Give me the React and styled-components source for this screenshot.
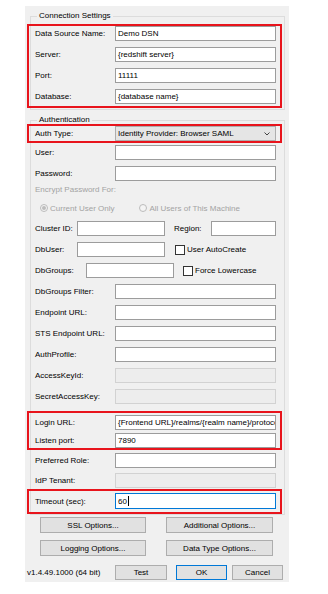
import React from "react";
import styled, { createGlobalStyle } from "styled-components";

const GlobalStyle = createGlobalStyle`
  body {
    margin: 0;
    background: #ffffff;
    font-family: "Liberation Sans", Tahoma, Arial, sans-serif;
    font-size: 8px;
    color: #000000;
  }
`;

const Dialog = styled.div`
  width: 264px;
  height: 576px;
  margin: 6px 0 0 25px;
  padding: 6px 0 0 5px;
  box-sizing: border-box;
  background: #f0f0f0;
  display: flex;
  flex-direction: column;
`;

const Group = styled.fieldset`
  width: 255px;
  box-sizing: border-box;
  margin: ${(p) => p.$mt || 0}px 0 0 0;
  padding: ${(p) => p.$pt || 0}px 8px ${(p) => p.$pb || 0}px 4px;
  border: 1px solid #dcdcdc;
  min-width: 0;
  display: flex;
  flex-direction: column;
`;

const Legend = styled.legend`
  padding: 0 2px;
  margin-left: 2px;
  line-height: 8px;
  font-size: 8px;
  color: #000000;
`;

const Highlight = styled.div`
  margin: ${(p) => p.$mt || 0}px -6px 0 -8px;
  padding: ${(p) => p.$pt || 0}px 4px ${(p) => p.$pb || 0}px 6px;
  border: 2px solid #e8141c;
  display: flex;
  flex-direction: column;
  gap: ${(p) => p.$gap || 0}px;
`;

const Rows = styled.div`
  display: flex;
  flex-direction: column;
  gap: ${(p) => p.$gap || 6}px;
  margin-top: ${(p) => p.$mt || 0}px;
`;

const Row = styled.div`
  display: flex;
  align-items: center;
  height: ${(p) => p.$h || 15}px;
  margin-top: ${(p) => p.$mt || 0}px;
  flex: none;
`;

const Label = styled.span`
  width: ${(p) => p.$w || 80}px;
  margin-left: ${(p) => p.$ml || 0}px;
  flex: none;
  white-space: nowrap;
  color: ${(p) => (p.$disabled ? "#a3a3a3" : "#000000")};
`;

const Field = styled.div`
  width: ${(p) => (p.$w ? `${p.$w}px` : "auto")};
  flex: ${(p) => (p.$w ? "none" : "1")};
  min-width: 0;
  height: ${(p) => p.$h || 15}px;
  box-sizing: border-box;
  border: 1px solid
    ${(p) => (p.$focus ? "#0078d7" : p.$disabled ? "#d2d2d2" : "#9c9c9c")};
  background: ${(p) => (p.$disabled ? "#ededed" : "#ffffff")};
  padding: 0 2px;
  display: flex;
  align-items: center;
  overflow: hidden;
  white-space: nowrap;
`;

const Caret = styled.span`
  width: 1px;
  height: 10px;
  background: #000;
  margin-left: 1px;
`;

const Select = styled.div`
  flex: 1;
  height: 15px;
  box-sizing: border-box;
  border: 1px solid #adadad;
  background: #e5e5e5;
  padding: 0 5px 0 2px;
  display: flex;
  align-items: center;
  justify-content: space-between;
  white-space: nowrap;
`;

const Check = styled.label`
  display: flex;
  align-items: center;
  gap: 2px;
  margin-left: ${(p) => p.$ml || 0}px;
  white-space: nowrap;
  color: ${(p) => (p.$disabled ? "#a3a3a3" : "#000000")};
`;

const Box = styled.span`
  width: 10px;
  height: 10px;
  box-sizing: border-box;
  border: 1px solid #333333;
  background: #ffffff;
`;

const Radio = styled.span`
  width: 8px;
  height: 8px;
  box-sizing: border-box;
  border-radius: 50%;
  border: 1px solid #bcbcbc;
  background: #f4f4f4;
  display: flex;
  align-items: center;
  justify-content: center;
  &::after {
    content: "";
    width: 4px;
    height: 4px;
    border-radius: 50%;
    background: ${(p) => (p.$on ? "#bcbcbc" : "transparent")};
  }
`;

const ButtonGrid = styled.div`
  display: grid;
  grid-template-columns: 106px 107px;
  column-gap: 20px;
  row-gap: 7px;
  margin: 2px 0 0 10px;
`;

const Button = styled.div`
  width: ${(p) => (p.$w ? `${p.$w}px` : "auto")};
  height: ${(p) => p.$h || 16}px;
  margin-left: ${(p) => p.$ml || 0}px;
  box-sizing: border-box;
  border: 1px solid ${(p) => (p.$primary ? "#0078d7" : "#adadad")};
  background: #e1e1e1;
  display: flex;
  align-items: center;
  justify-content: center;
  white-space: nowrap;
`;

const Footer = styled.div`
  display: flex;
  align-items: center;
  margin: 9px 0 0 -3px;
`;

const Version = styled.span`
  width: 88px;
  flex: none;
  white-space: nowrap;
`;

const Chevron = () => (
  <svg width="6" height="4" viewBox="0 0 6 4">
    <path d="M0.5 0.5 L3 3 L5.5 0.5" fill="none" stroke="#444" strokeWidth="1" />
  </svg>
);

const TextRow = ({ label, value, disabled }) => (
  <Row>
    <Label>{label}</Label>
    <Field $disabled={disabled}>{value}</Field>
  </Row>
);

export default function App() {
  return (
    <>
      <GlobalStyle />
      <Dialog>
        <Group $pt={4} $pb={1}>
          <Legend>Connection Settings</Legend>
          <Highlight $pb={2} $gap={6}>
            <TextRow label="Data Source Name:" value="Demo DSN" />
            <TextRow label="Server:" value="{redshift server}" />
            <TextRow label="Port:" value="11111" />
            <TextRow label="Database:" value="{database name}" />
          </Highlight>
        </Group>

        <Group $mt={6}>
          <Legend>Authentication</Legend>
          <Highlight>
            <Row>
              <Label>Auth Type:</Label>
              <Select>
                <span>Identity Provider: Browser SAML</span>
                <Chevron />
              </Select>
            </Row>
          </Highlight>
          <Row $mt={2}>
            <Label>User:</Label>
            <Field />
          </Row>
          <Row $mt={6}>
            <Label>Password:</Label>
            <Field />
          </Row>
          <Row $h={10} $mt={3}>
            <Label $disabled>Encrypt Password For:</Label>
          </Row>
          <Row $h={12} $mt={8}>
            <Check $disabled $ml={5}>
              <Radio $on />
              Current User Only
            </Check>
            <Check $disabled $ml={25}>
              <Radio />
              All Users of This Machine
            </Check>
          </Row>
          <Rows $gap={6} $mt={7}>
            <Row>
              <Label $w={42}>Cluster ID:</Label>
              <Field $w={88} />
              <Label $w={37} $ml={9}>Region:</Label>
              <Field />
            </Row>
            <Row>
              <Label $w={42}>DbUser:</Label>
              <Field $w={88} />
              <Check $ml={10}>
                <Box />
                User AutoCreate
              </Check>
            </Row>
            <Row>
              <Label $w={51}>DbGroups:</Label>
              <Field $w={88} />
              <Check $ml={9}>
                <Box />
                Force Lowercase
              </Check>
            </Row>
            <TextRow label="DbGroups Filter:" />
            <TextRow label="Endpoint URL:" />
            <TextRow label="STS Endpoint URL:" />
            <TextRow label="AuthProfile:" />
            <TextRow label="AccessKeyId:" disabled />
            <TextRow label="SecretAccessKey:" disabled />
          </Rows>
          <Highlight $mt={7} $pt={2} $gap={3}>
            <TextRow
              label="Login URL:"
              value="{Frontend URL}/realms/{realm name}/protocol/saml/clients/amazon-aws"
            />
            <TextRow label="Listen port:" value="7890" />
          </Highlight>
          <Row $mt={3}>
            <Label>Preferred Role:</Label>
            <Field />
          </Row>
          <Row $mt={5}>
            <Label>IdP Tenant:</Label>
            <Field $disabled />
          </Row>
          <Highlight $mt={1} $pt={2} $pb={3}>
            <Row $h={16}>
              <Label>Timeout (sec):</Label>
              <Field $focus $h={16}>
                60
                <Caret />
              </Field>
            </Row>
          </Highlight>
        </Group>

        <ButtonGrid>
          <Button>SSL Options...</Button>
          <Button>Additional Options...</Button>
          <Button>Logging Options...</Button>
          <Button>Data Type Options...</Button>
        </ButtonGrid>

        <Footer>
          <Version>v1.4.49.1000 (64 bit)</Version>
          <Button $w={52} $h={15}>Test</Button>
          <Button $w={51} $h={15} $ml={9} $primary>OK</Button>
          <Button $w={51} $h={15} $ml={5}>Cancel</Button>
        </Footer>
      </Dialog>
    </>
  );
}
